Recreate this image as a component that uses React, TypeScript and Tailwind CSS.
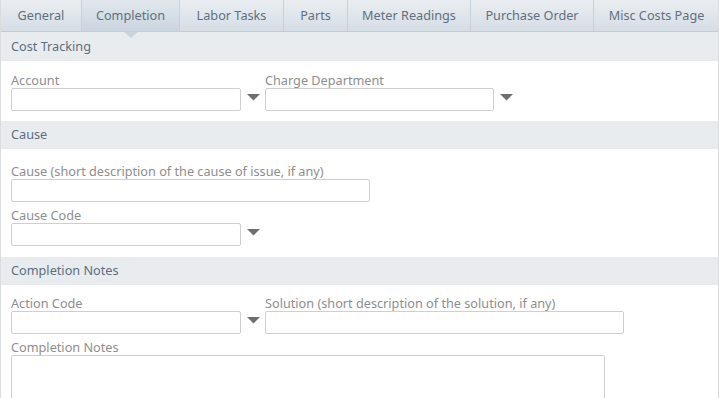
import React from "react";

const tabs = [
  { name: "General", w: "w-[81px]" },
  { name: "Completion", w: "w-[98px]", active: true },
  { name: "Labor Tasks", w: "w-[104px]" },
  { name: "Parts", w: "w-[64px]" },
  { name: "Meter Readings", w: "w-[123px]" },
  { name: "Purchase Order", w: "w-[123px]" },
  { name: "Misc Costs Page", w: "w-[126px]" },
];

function Caret() {
  return (
    <svg width="13" height="7" viewBox="0 0 13 7" className="mt-[-4px]">
      <polygon points="0,0 13,0 6.5,6.5" fill="#6f6f6f" />
    </svg>
  );
}

function Label({ children }: { children: React.ReactNode }) {
  return <div className="h-[16px] text-[12.7px] leading-[16px] text-[#8e8e8e]">{children}</div>;
}

function Input({ w }: { w: string }) {
  return <div className={`${w} h-[23px] rounded-[2px] border border-[#cfcfcf] bg-white`} />;
}

function Select({ w }: { w: string }) {
  return (
    <div className="flex items-center">
      <Input w={w} />
      <div className="flex w-[24px] justify-center">
        <Caret />
      </div>
    </div>
  );
}

function Header({ children, h }: { children: React.ReactNode; h: string }) {
  return (
    <div className={`flex ${h} items-center bg-[#e8ecef] pl-[10px] text-[12.7px] text-[#5e6e80]`}>
      {children}
    </div>
  );
}

export default function App() {
  return (
    <div
      className="relative h-[398px] w-[719px] overflow-hidden border-x border-[#d9dde0] bg-white"
      style={{ fontFamily: '"Noto Sans", sans-serif' }}
    >
      <div className="flex h-[32px] border-b border-[#c2ccd6] bg-gradient-to-b from-[#eaeef2] to-[#d5dde5]">
        {tabs.map((t) => (
          <div
            key={t.name}
            className={`relative flex ${t.w} shrink-0 items-center justify-center border-r border-[#c7d1db] text-[12.7px] text-[#617080] ${
              t.active ? "bg-gradient-to-b from-[#e1e7ed] to-[#cbd5df]" : ""
            }`}
          >
            {t.name}
            {t.active && (
              <svg
                width="14"
                height="7"
                viewBox="0 0 14 7"
                className="absolute left-1/2 top-full z-10 -ml-[7px] mt-[1px]"
              >
                <polygon points="0,0 14,0 7,6" fill="#cbd5de" />
              </svg>
            )}
          </div>
        ))}
      </div>

      <Header h="h-[29px]">Cost Tracking</Header>
      <div className="flex pb-[10px] pl-[10px] pt-[11px]">
        <div className="w-[254px]">
          <Label>Account</Label>
          <Select w="w-[230px]" />
        </div>
        <div>
          <Label>Charge Department</Label>
          <Select w="w-[229px]" />
        </div>
      </div>

      <Header h="h-[28px]">Cause</Header>
      <div className="flex flex-col gap-[5px] pb-[11px] pl-[10px] pt-[14px]">
        <div>
          <Label>Cause (short description of the cause of issue, if any)</Label>
          <Input w="w-[359px]" />
        </div>
        <div>
          <Label>Cause Code</Label>
          <Select w="w-[230px]" />
        </div>
      </div>

      <Header h="h-[28px]">Completion Notes</Header>
      <div className="flex flex-col gap-[5px] pl-[10px] pt-[10px]">
        <div className="flex">
          <div className="w-[254px]">
            <Label>Action Code</Label>
            <Select w="w-[230px]" />
          </div>
          <div>
            <Label>Solution (short description of the solution, if any)</Label>
            <Input w="w-[359px]" />
          </div>
        </div>
        <div>
          <Label>Completion Notes</Label>
          <div className="h-[60px] w-[594px] rounded-[2px] border border-[#cfcfcf]" />
        </div>
      </div>
    </div>
  );
}
